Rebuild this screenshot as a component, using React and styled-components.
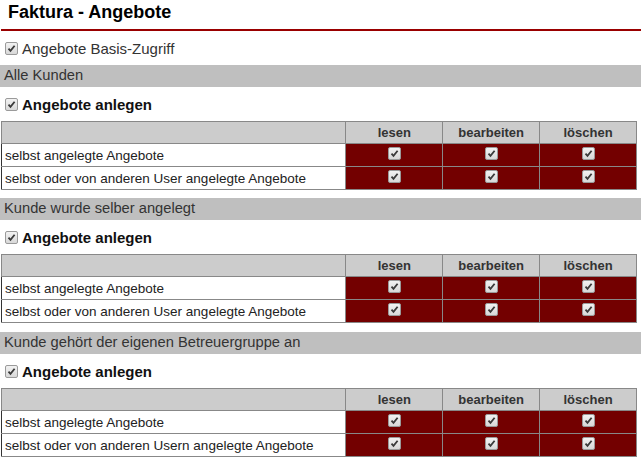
import React from 'react';
import styled, { createGlobalStyle } from 'styled-components';

const GlobalStyle = createGlobalStyle`
  body {
    margin: 0;
    background: #ffffff;
    font-family: 'Liberation Sans', Arial, sans-serif;
    color: #222;
  }
`;

const Page = styled.div`
  width: 641px;
`;

const Header = styled.h1`
  margin: 0 0 0 1px;
  padding: 1px 8px 0 7px;
  height: 28px;
  font-size: 18px;
  font-weight: bold;
  color: #000;
  line-height: 22px;
  border-bottom: 2px solid #9a0000;
`;

const CheckRow = styled.label`
  display: flex;
  align-items: center;
  gap: 4px;
  padding-left: 5px;
  height: ${p => p.$h || 22}px;
  font-size: 15px;
  font-weight: ${p => (p.$bold ? 'bold' : 'normal')};
  color: ${p => (p.$bold ? '#111' : '#333')};
`;

const Box = styled.span`
  display: inline-flex;
  align-items: center;
  justify-content: center;
  width: 11px;
  height: 11px;
  border: 1px solid #9a9a9a;
  border-radius: 2px;
  background: linear-gradient(#f2f2f2, #d8d8d8);
  flex: none;
`;

const Check = () => (
  <Box>
    <svg width="9" height="9" viewBox="0 0 9 9">
      <path d="M1.5 4.6 L3.5 6.8 L7.6 1.8" fill="none" stroke="#3a3a3a" strokeWidth="1.8" />
    </svg>
  </Box>
);

const Section = styled.div`
  margin-top: ${p => p.$top}px;
`;

const GroupBar = styled.div`
  height: 22px;
  line-height: 21px;
  background: #bfbfbf;
  padding-left: 4px;
  font-size: 14.7px;
  color: #333;
`;

const Table = styled.table`
  border-collapse: collapse;
  width: 636px;
  margin-left: 1px;
  font-size: 13.5px;
  border: 1px solid #333;
`;

const Th = styled.th`
  background: #cccccc;
  height: 21px;
  padding: 0;
  font-weight: bold;
  font-size: 13px;
  color: #333;
  text-align: center;
  border: 1px solid #888;
  width: ${p => p.$w}px;
`;

const Label = styled.td`
  height: 22px;
  padding: 0 0 0 3px;
  color: #222;
  border: 1px solid #888;
  border-left: 1px solid #333;
`;

const Cell = styled.td`
  background: #730000;
  border: 1px solid #888;
  text-align: center;
  padding: 0;
  & > span {
    vertical-align: middle;
    position: relative;
    top: -2px;
  }
`;

const sections = [
  { title: 'Alle Kunden', last: 'User', top: 6 },
  { title: 'Kunde wurde selber angelegt', last: 'User', top: 8 },
  { title: 'Kunde gehört der eigenen Betreuergruppe an', last: 'Usern', top: 9 },
];

function Rights({ title, last, top }) {
  const rows = ['selbst angelegte Angebote', `selbst oder von anderen ${last} angelegte Angebote`];
  return (
    <Section $top={top}>
      <GroupBar>{title}</GroupBar>
      <CheckRow $bold $h={34}>
        <Check />
        Angebote anlegen
      </CheckRow>
      <Table>
        <thead>
          <tr>
            <Th $w={344} />
            <Th $w={96}>lesen</Th>
            <Th $w={96}>bearbeiten</Th>
            <Th $w={96}>löschen</Th>
          </tr>
        </thead>
        <tbody>
          {rows.map(r => (
            <tr key={r}>
              <Label>{r}</Label>
              <Cell><Check /></Cell>
              <Cell><Check /></Cell>
              <Cell><Check /></Cell>
            </tr>
          ))}
        </tbody>
      </Table>
    </Section>
  );
}

export default function App() {
  return (
    <Page>
      <GlobalStyle />
      <Header>Faktura - Angebote</Header>
      <Section $top={6}>
        <CheckRow $h={22}>
          <Check />
          Angebote Basis-Zugriff
        </CheckRow>
      </Section>
      {sections.map(s => (
        <Rights key={s.title} {...s} />
      ))}
    </Page>
  );
}
